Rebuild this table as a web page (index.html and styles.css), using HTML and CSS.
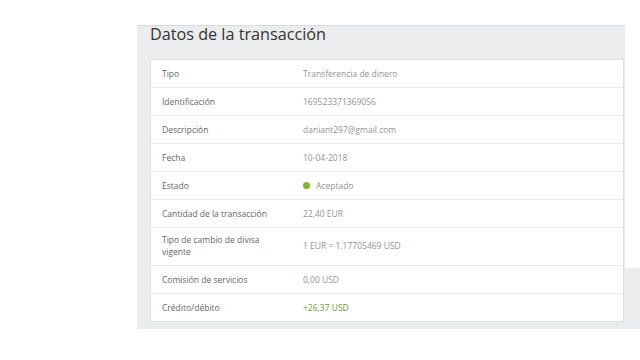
FILE: index.html
```html
<!DOCTYPE html>
<html lang="es">
<head>
<meta charset="utf-8">
<title>Datos de la transacción</title>
<link rel="stylesheet" href="styles.css">
</head>
<body>
<div class="page">
  <section class="panel">
    <h1 class="title">Datos de la transacción</h1>
    <div class="card">
      <div class="row"><span class="label">Tipo</span><span class="value">Transferencia de dinero</span></div>
      <div class="row"><span class="label">Identificación</span><span class="value">169523371369056</span></div>
      <div class="row"><span class="label">Descripción</span><span class="value">daniant297@gmail.com</span></div>
      <div class="row"><span class="label">Fecha</span><span class="value">10-04-2018</span></div>
      <div class="row"><span class="label">Estado</span><span class="value status"><span class="dot"></span>Aceptado</span></div>
      <div class="row"><span class="label">Cantidad de la transacción</span><span class="value">22,40 EUR</span></div>
      <div class="row row-tall"><span class="label">Tipo de cambio de divisa vigente</span><span class="value">1 EUR = 1.17705469 USD</span></div>
      <div class="row"><span class="label">Comisión de servicios</span><span class="value">0,00 USD</span></div>
      <div class="row"><span class="label">Crédito/débito</span><span class="value credit">+26,37 USD</span></div>
    </div>
  </section>
  <div class="side"></div>
</div>
</body>
</html>
```
FILE: styles.css
```css
html, body {
  margin: 0;
  padding: 0;
  background: #ffffff;
}
body {
  font-family: "Open Sans", "Liberation Sans", sans-serif;
}
.page {
  display: flex;
  padding-top: 25px;
  padding-left: 137px;
}
.panel {
  width: 488px;
  flex: none;
  background: #ebeced;
  border-top: 1px solid #d9dbdb;
  padding: 0 0 7px 13px;
  box-sizing: border-box;
}
.side {
  flex: 1;
  align-self: flex-end;
  height: 61px;
  background: #ebeced;
}
.title {
  margin: 0 0 17px 0;
  font-size: 16.2px;
  line-height: 16px;
  font-weight: 400;
  color: #333333;
}
.card {
  width: 474px;
  background: #ffffff;
  border: 1px solid #dedfdf;
  box-sizing: border-box;
}
.row {
  display: grid;
  grid-template-columns: 115px 1fr;
  column-gap: 26px;
  align-items: center;
  min-height: 28px;
  padding: 6px 11px;
  box-sizing: border-box;
  border-bottom: 1px solid #ebebeb;
  font-size: 8.5px;
  line-height: 12px;
}
.row-tall {
  padding-bottom: 7px;
}
.row:last-child {
  border-bottom: none;
  min-height: 27px;
}
.label {
  color: #666666;
}
.value {
  color: #939393;
}
.status {
  display: flex;
  align-items: center;
}
.dot {
  width: 7px;
  height: 7px;
  border-radius: 50%;
  background: #7cb82a;
  margin-right: 6px;
}
.credit {
  color: #5f9a45;
}
```
